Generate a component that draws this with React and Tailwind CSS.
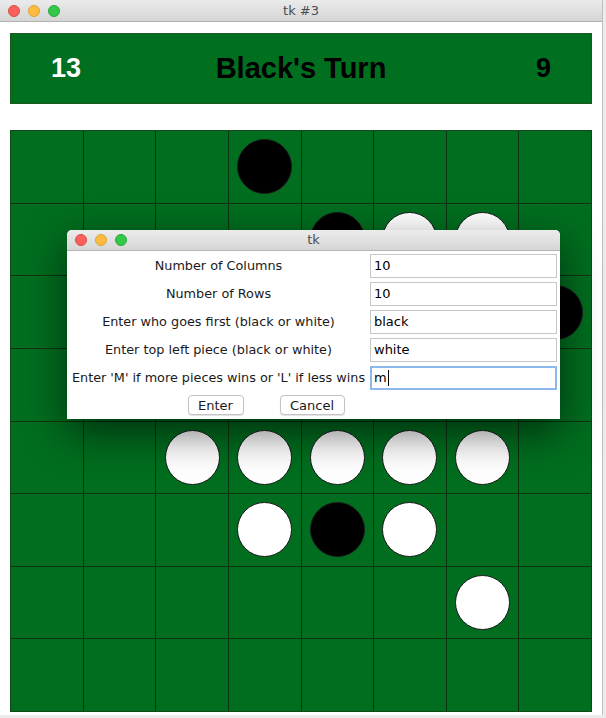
const W = 'w', B = 'b'

// 8x8 board, rows top to bottom
const board = [
  [0, 0, 0, B, 0, 0, 0, 0],
  [0, 0, 0, 0, B, W, W, 0],
  [0, 0, 0, 0, 0, 0, 0, B],
  [0, 0, 0, 0, 0, 0, 0, 0],
  [0, 0, W, W, W, W, W, 0],
  [0, 0, 0, W, B, W, 0, 0],
  [0, 0, 0, 0, 0, 0, W, 0],
  [0, 0, 0, 0, 0, 0, 0, 0],
]

const fields = [
  ['Number of Columns', '10'],
  ['Number of Rows', '10'],
  ['Enter who goes first (black or white)', 'black'],
  ['Enter top left piece (black or white)', 'white'],
  ["Enter 'M' if more pieces wins or 'L' if less wins", 'm'],
]

function Lights() {
  return (
    <div className="flex items-center gap-[8px]">
      <span className="w-[12px] h-[12px] rounded-full bg-[#fc605c] border border-[#de4b45]" />
      <span className="w-[12px] h-[12px] rounded-full bg-[#fdbc40] border border-[#dea236]" />
      <span className="w-[12px] h-[12px] rounded-full bg-[#34c84a] border border-[#27aa35]" />
    </div>
  )
}

function Piece({ c }) {
  if (!c) return null
  return (
    <div
      className={
        'w-[55px] h-[55px] rounded-full border border-[#1a1a1a] ' +
        (c === B ? 'bg-black' : 'bg-white')
      }
    />
  )
}

export default function App() {
  return (
    <div className="w-[606px] h-[718px] relative overflow-hidden bg-[#ececec] font-['Liberation_Sans',sans-serif]">
      <div className="w-[603px] h-[715px] flex flex-col bg-white border-r border-[#bdbdbd]">
        <div className="h-[22px] shrink-0 flex items-center px-[8px] relative bg-gradient-to-b from-[#ebebeb] to-[#d5d5d5] border-b border-[#b1b1b1]">
          <Lights />
          <div className="absolute inset-0 flex items-center justify-center text-[13px] text-[#4d4d4d] font-['DejaVu_Sans',sans-serif]">tk #3</div>
        </div>

        <div className="flex-1 flex flex-col pl-[10px] pr-[10px] pt-[11px]">
          <div className="h-[71px] bg-[#007020] border border-[#1a5a1f] flex items-center px-[40px]">
            <span className="w-[60px] text-white text-[27px] font-bold">13</span>
            <span className="flex-1 text-center text-black text-[29px] font-bold">Black's Turn</span>
            <span className="w-[60px] text-right text-black text-[27px] font-bold">9</span>
          </div>

          <div className="mt-[26px] w-[582px] h-[582px] bg-[#0c3410] border border-[#0d4a15] grid grid-cols-8 grid-rows-8 gap-px">
            {board.flat().map((c, i) => (
              <div key={i} className="bg-[#006d1f] flex items-center justify-center">
                <Piece c={c} />
              </div>
            ))}
          </div>
        </div>
      </div>

      {/* dialog window */}
      <div className="absolute left-[67px] top-[230px] w-[493px] rounded-t-[5px] overflow-hidden bg-white shadow-[0_14px_40px_rgba(0,0,0,0.55)] font-['DejaVu_Sans',sans-serif]">
        <div className="h-[21px] flex items-center px-[8px] relative bg-gradient-to-b from-[#ececec] to-[#d6d6d6] border-b border-[#b5b5b5]">
          <Lights />
          <div className="absolute inset-0 flex items-center justify-center text-[13px] text-[#4d4d4d]">tk</div>
        </div>
        <div className="flex flex-col gap-[4px] pt-[3px] pr-[3px] pb-[4px]">
          {fields.map(([label, value], i) => (
            <div key={i} className="flex items-center h-[24px]">
              <div className="w-[303px] text-center text-[12.8px] text-[#1a1a1a] whitespace-nowrap">{label}</div>
              {i === 4 ? (
                <div className="flex-1 h-[24px] border-2 border-[#8cb8ec] flex items-center px-[2px] text-[13px] text-black">
                  {value}
                  <span className="w-px h-[16px] bg-black ml-px" />
                </div>
              ) : (
                <div className="flex-1 h-[24px] border border-[#c6c6c6] flex items-center px-[3px] text-[13px] text-black">
                  {value}
                </div>
              )}
            </div>
          ))}
          <div className="flex items-center justify-center gap-[36px] pr-[92px] mt-[1px]">
            <button className="w-[56px] h-[20px] rounded-[4px] bg-white border border-[#c3c3c3] shadow-[0_1px_1px_rgba(0,0,0,0.12)] text-[13px] text-[#1a1a1a]">Enter</button>
            <button className="w-[65px] h-[20px] rounded-[4px] bg-white border border-[#c3c3c3] shadow-[0_1px_1px_rgba(0,0,0,0.12)] text-[13px] text-[#1a1a1a]">Cancel</button>
          </div>
        </div>
      </div>
    </div>
  )
}
